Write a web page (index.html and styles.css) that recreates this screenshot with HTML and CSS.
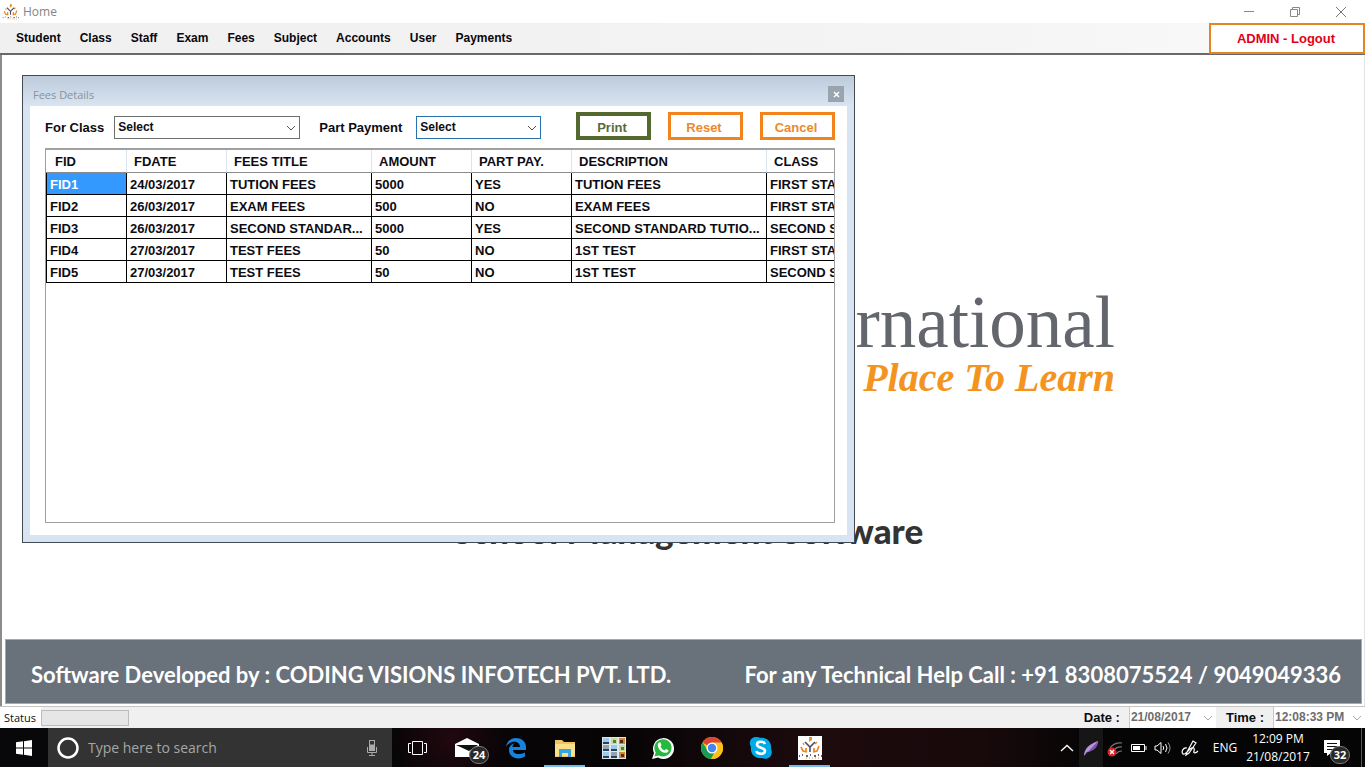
FILE: index.html
```html
<!DOCTYPE html>
<html lang="en">
<head>
<meta charset="utf-8">
<title>Home</title>
<link rel="stylesheet" href="styles.css">
</head>
<body>
<svg class="defs" aria-hidden="true">
  <symbol id="chevron" viewBox="0 0 10 6"><path d="M1 1l4 4 4-4" fill="none" stroke="currentColor"/></symbol>
  <symbol id="school" viewBox="0 0 24 24">
    <path d="M11 1h3v3l-3 2z" fill="#e8922c"/>
    <path d="M5 7l1 2M17 8l2-2" stroke="#e8922c" stroke-width="1.500"/>
    <path d="M7 6l5 5 5-5M12 11v5" fill="none" stroke="#4b4f66" stroke-width="1.600"/>
    <path d="M3 11l2 4 4 1M21 10l-2 5-4 1M8 12v3M16 12v3" fill="none" stroke="#e8862c" stroke-width="1.700"/>
    <path d="M1 20h1m2-1h1m3 1h2m2-1h1m3 1h2m2-1h1m2 1h1" fill="none" stroke="#333" stroke-width="1.300"/>
    <path d="M8 22h14" stroke="#e8862c" stroke-dasharray="1 2"/>
  </symbol>
</svg>

<header class="titlebar">
  <svg class="app-icon" viewBox="0 0 24 24"><use href="#school"/></svg>
  <h1 class="app-title">Home</h1>
  <div class="window-controls">
    <button type="button" aria-label="Minimize"><svg width="12" height="12"><path d="M1 5.500h10" stroke="#888"/></svg></button>
    <button type="button" aria-label="Restore"><svg width="12" height="12" fill="none" stroke="#888"><path d="M1.500 3.500h7v7h-7zM3.500 3v-1.500h7v7h-1.500"/></svg></button>
    <button type="button" aria-label="Close"><svg width="12" height="12"><path d="M1 1l10 10M11 1l-10 10" stroke="#777"/></svg></button>
  </div>
</header>

<nav class="menubar">
  <a href="#student">Student</a>
  <a href="#class">Class</a>
  <a href="#staff">Staff</a>
  <a href="#exam">Exam</a>
  <a href="#fees">Fees</a>
  <a href="#subject">Subject</a>
  <a href="#accounts">Accounts</a>
  <a href="#user">User</a>
  <a href="#payments">Payments</a>
  <button type="button" class="logout">ADMIN - Logout</button>
</nav>

<main class="workspace">
  <div class="splash">
    <div class="brand">
      <p class="brand-name">International</p>
      <p class="brand-tagline">Place To Learn</p>
    </div>
    <p class="product">School Management Software</p>
  </div>
  <footer class="credits">
    <span>Software Developed by : CODING VISIONS INFOTECH PVT. LTD.</span>
    <span>For any Technical Help Call : +91 8308075524 / 9049049336</span>
  </footer>

  <section class="dialog" aria-labelledby="dialog-title">
    <div class="dialog-head">
      <h2 id="dialog-title">Fees Details</h2>
      <button type="button" class="dialog-close" aria-label="Close"><svg width="7" height="7"><path d="M1 1l5 5M6 1l-5 5" stroke="#fff" stroke-width="1.500"/></svg></button>
    </div>
    <div class="dialog-body">
      <form class="filters">
        <label for="for-class">For Class</label>
        <span class="combo combo-class">
          <select id="for-class"><option>Select</option></select>
          <svg class="chevron"><use href="#chevron"/></svg>
        </span>
        <label for="part-payment">Part Payment</label>
        <span class="combo combo-part">
          <select id="part-payment"><option>Select</option></select>
          <svg class="chevron"><use href="#chevron"/></svg>
        </span>
        <div class="actions">
          <button type="button" class="action action-print">Print</button>
          <button type="button" class="action">Reset</button>
          <button type="button" class="action">Cancel</button>
        </div>
      </form>
      <div class="grid">
        <table>
          <colgroup><col class="c-id"><col class="c-mid"><col class="c-title"><col class="c-mid"><col class="c-mid"><col class="c-desc"><col class="c-class"></colgroup>
          <thead>
            <tr><th>FID</th><th>FDATE</th><th>FEES TITLE</th><th>AMOUNT</th><th>PART PAY.</th><th>DESCRIPTION</th><th>CLASS</th></tr>
          </thead>
          <tbody>
            <tr><td class="selected">FID1</td><td>24/03/2017</td><td>TUTION FEES</td><td>5000</td><td>YES</td><td>TUTION FEES</td><td>FIRST STANDARD</td></tr>
            <tr><td>FID2</td><td>26/03/2017</td><td>EXAM FEES</td><td>500</td><td>NO</td><td>EXAM FEES</td><td>FIRST STANDARD</td></tr>
            <tr><td>FID3</td><td>26/03/2017</td><td>SECOND STANDAR...</td><td>5000</td><td>YES</td><td>SECOND STANDARD TUTIO...</td><td>SECOND STANDARD</td></tr>
            <tr><td>FID4</td><td>27/03/2017</td><td>TEST FEES</td><td>50</td><td>NO</td><td>1ST TEST</td><td>FIRST STANDARD</td></tr>
            <tr><td>FID5</td><td>27/03/2017</td><td>TEST FEES</td><td>50</td><td>NO</td><td>1ST TEST</td><td>SECOND STANDARD</td></tr>
          </tbody>
        </table>
      </div>
    </div>
  </section>
</main>

<div class="statusbar">
  <span class="status-label">Status</span>
  <span class="status-progress"></span>
  <label class="status-field" for="date">Date :</label>
  <span class="picker"><input id="date" type="text" value="21/08/2017" readonly><svg class="chevron"><use href="#chevron"/></svg></span>
  <label class="status-field" for="time">Time :</label>
  <span class="picker picker-time"><input id="time" type="text" value="12:08:33 PM" readonly><svg class="chevron"><use href="#chevron"/></svg></span>
</div>

<div class="taskbar">
  <button type="button" class="start" aria-label="Start"><svg width="16" height="16" fill="#fff"><path d="M0 2.300L7 1.300V7.500H0zM8 1.200L16 0V7.500H8zM0 8.500H7V14.700L0 13.700zM8 8.500H16V16L8 14.800z"/></svg></button>
  <div class="search">
    <svg width="24" height="24"><circle cx="12" cy="12" r="9.500" fill="none" stroke="#fff" stroke-width="2.500"/></svg>
    <input type="text" placeholder="Type here to search" aria-label="Search">
    <svg width="12" height="18" fill="none" stroke="#aaa"><rect x="3.500" y="1.500" width="5" height="10"/><path d="M4 6h4v5H4z" fill="#aaa"/><path d="M1.500 8v5.500h9V8M6 13.500v3M3 16.500h6"/></svg>
  </div>
  <div class="apps">
    <button type="button" aria-label="Task View"><svg width="22" height="16" fill="none" stroke="#fff"><path d="M5.500 1.500h10v13h-10zM4 3.500H1.500v9H4M17 3.500h2.500v9H17"/></svg></button>
    <button type="button" aria-label="Mail"><svg width="26" height="22"><path d="M1 7L13 1l12 6v13H1z" fill="#fff"/><path d="M2 8h22l-9 6z" fill="#111"/></svg><span class="count">24</span></button>
    <button type="button" aria-label="Edge"><svg width="22" height="22" viewBox="0 0 22 22"><path d="M1 10C2 4 6 1 11 1c6 0 10 4 10 9v3H8c0 4 6 5.500 12 2.500v4C12 24 4 20 4 13c0-4 3-6 6-7-2 1-2.500 3-2.500 4H15c0-5-5-6-8-5-3 .8-5 3-6 5z" fill="#1683e0"/></svg></button>
    <button type="button" aria-label="File Explorer" class="running"><svg width="22" height="20"><path d="M1 2h7l2 2h11v15H1z" fill="#f0c55c"/><path d="M1 6h20v12H1z" fill="#fbe08c"/><path d="M5 11h12v8h-3v-4H8v4H5z" fill="#39a5dc"/></svg></button>
    <button type="button" aria-label="Photo Gallery"><svg width="24" height="24"><path d="M0 1h24v22H0z" fill="#dfe7ee"/><path d="M1 2h6v6H1zM1 16h6v6H1zM9 9h6v6H9z" fill="#9ccbe6"/><path d="M9 2h6v6H9zM17 9h6v6h-6z" fill="#c3dba0"/><path d="M17 2h6v6h-6zM17 16h6v6h-6z" fill="#d08a3c"/><path d="M1 9h6v6H1zM9 16h6v6H9z" fill="#8fa3b5"/><path d="M1 6h6v2H1zM1 13h6v2H1zM9 20h6v2H9zM1 20h6v2H1zM9 13h6v2H9z" fill="#29425e"/><path d="M11 4h3v3h-3zM19 11h3v3h-3z" fill="#4c832b"/><path d="M18 4h3v3h-3zM19 18h3v3h-3z" fill="#5b2a10"/></svg></button>
    <button type="button" aria-label="WhatsApp"><svg width="24" height="24"><path d="M1 23l2-6A10.500 10.500 0 1 1 7 21.500z" fill="#fff"/><path d="M3.500 20.500l1.200-4A8.600 8.600 0 1 1 7.800 19.400z" fill="#29b83f"/><path d="M8 6.500l1.500 0 1 2.500-1 1.500c1 2 2 3 4 4l1.500-1.500 2.500 1.200c0 2-1.500 2.600-3.500 2.600C10 16.500 6.500 12 6.800 8.700 6.900 7.700 7.200 7 8 6.500z" fill="#fff"/></svg></button>
    <button type="button" aria-label="Chrome"><svg width="22" height="22"><circle cx="11" cy="11" r="11" fill="#fbc116"/><path d="M11 11L1.500 5.500A11 11 0 0 1 20.500 5.500z" fill="#db4437"/><path d="M1.500 5.500A11 11 0 0 0 10 22l4.500-8L7 14z" fill="#179c52"/><path d="M11 5.500h9.500A11 11 0 0 1 10 22l5-9z" fill="#fbc116"/><circle cx="11" cy="11" r="5.500" fill="#fff"/><circle cx="11" cy="11" r="4.200" fill="#4285f4"/></svg></button>
    <button type="button" aria-label="Skype"><svg width="24" height="24"><path d="M7 1a6 6 0 0 1 4 .8C19 1 23 7 22 13c3 6-3 12-9 9C6 23 1 18 2 11-1 6 2 1 7 1z" fill="#00aae8"/><path d="M16 8c-1-3-8-3-8 .5 0 4 8 2.500 8 6.500 0 4-8 3.500-8.500 0" fill="none" stroke="#fff" stroke-width="2.600"/></svg></button>
    <button type="button" aria-label="School" class="running"><svg class="school-tile" viewBox="0 0 24 24"><use href="#school"/></svg></button>
  </div>
  <div class="tray">
    <button type="button" aria-label="Show hidden icons"><svg width="14" height="8"><path d="M1 7l6-5.500L13 7" fill="none" stroke="#fff" stroke-width="1.300"/></svg></button>
    <button type="button" aria-label="Feather" class="lit"><svg width="16" height="18"><path d="M1 17C1 10 6 5 15 2c0 5-4 10-11 11z" fill="#b893dd"/><path d="M1 17C5 12 10 8 15 2c0 5-4 10-11 11z" fill="#7e4fb2"/></svg></button>
    <button type="button" aria-label="Network"><svg width="18" height="18"><path d="M4 9a13 13 0 0 1 12-5M7 12a10 10 0 0 1 9-4M10 15a7 7 0 0 1 6-3" fill="none" stroke="#777" stroke-width="1.200"/><circle cx="6" cy="13" r="4.500" fill="#d5222a"/><path d="M4 11l4 4M8 11l-4 4" stroke="#fff" stroke-width="1.300"/></svg></button>
    <button type="button" aria-label="Battery"><svg width="16" height="10"><path d="M.500 1.500h13v7H.500zM15 3v4" fill="none" stroke="#fff"/><path d="M2 3h7v4H2z" fill="#fff"/></svg></button>
    <button type="button" aria-label="Volume"><svg width="18" height="14" fill="none" stroke="#fff"><path d="M1 5h2l4-3.500v11L3 9H1zM9 5q1.500 2 0 4M11.500 3q3 4 0 8"/><path d="M14 1.500q4 5.500 0 11" stroke="#999"/></svg></button>
    <button type="button" aria-label="Ink workspace" class="ink"><svg width="18" height="18" fill="none" stroke="#fff" stroke-width="1.200"><path d="M6 13L12 2l3 2-7 10-3 2zM6 9c-4-1-6 4-4 6 2 1 4-2 7-5s5-1 4 2 2 2 4 0"/></svg></button>
    <button type="button" class="lang">ENG</button>
    <button type="button" class="clock"><time>12:09 PM</time><time>21/08/2017</time></button>
    <button type="button" aria-label="Notifications" class="notices"><svg width="18" height="18"><path d="M1 1h16v13H8l-4 3v-3H1z" fill="#fff"/><path d="M4 4.500h10M4 7.500h10M4 10.500h7" stroke="#111"/></svg><span class="count">32</span></button>
  </div>
</div>
</body>
</html>
```
FILE: styles.css
```css
* { box-sizing: border-box; }

body {
  margin: 0;
  height: 100vh;
  display: flex;
  flex-direction: column;
  overflow: hidden;
  background: #fff;
  color: #0c0c12;
  font: bold 13px/16px "Liberation Sans", Arial, sans-serif;
}

h1, h2, p { margin: 0; }
button { padding: 0; border: 0; background: none; color: inherit; font: inherit; }
svg { display: block; flex: none; }
.defs { position: absolute; width: 0; height: 0; }

.titlebar { flex: none; display: flex; align-items: center; height: 23px; padding-left: 2px; }
.app-icon { width: 17px; height: 18px; }
.app-title { margin-left: 4px; color: #858585; font: 12px/16px "Open Sans", sans-serif; }
.window-controls { display: flex; margin-left: auto; padding-right: 1px; }
.window-controls button { display: grid; place-items: center; width: 46px; height: 21px; }

.menubar {
  flex: none;
  display: flex;
  align-items: center;
  gap: 19px;
  height: 32px;
  padding-left: 16px;
  border-bottom: 2px solid #696969;
  background: linear-gradient(90deg, #f0f0f0, #f3f3f3 60%, #fafafa);
  font-size: 12px;
}
.menubar a { color: #08080d; text-decoration: none; }
.logout {
  align-self: flex-start;
  flex: none;
  width: 156px;
  height: 31px;
  margin-left: auto;
  padding-right: 2px;
  border: 2px solid #e08624;
  background: #fff;
  color: #e3001b;
  font-size: 13px;
}

.workspace {
  position: relative;
  flex: 1;
  min-height: 0;
  display: flex;
  flex-direction: column;
  border-left: 2px solid #8c8c8c;
  border-right: 1px solid #e3e3e3;
}
.splash { flex: 1; min-height: 0; padding-top: 232px; }
.brand { max-width: 864px; margin: 0 auto; text-align: right; }
.brand-name { color: #63666c; font: 73px/72px "Liberation Serif", serif; }
.brand-tagline { color: #f49420; font: italic bold 40px/38px "Liberation Serif", cursive; }
.product { margin-top: 113px; padding-left: 10px; color: #333; text-align: center; font: 900 35px/40px Lato, sans-serif; }
.credits {
  flex: none;
  display: flex;
  align-items: center;
  justify-content: space-between;
  height: 65px;
  margin: 0 2px 2px 3px;
  padding: 6px 20px 0 25px;
  border: 1px solid #a4abb1;
  background: #69717b;
  color: #fff;
  font: bold 22px/28px Lato, sans-serif;
  white-space: nowrap;
}

.dialog {
  position: absolute;
  top: 20px;
  left: 20px;
  width: 833px;
  display: flex;
  flex-direction: column;
  padding: 0 7px 7px;
  border: 1px solid #454b55;
  background: linear-gradient(#bdcbdb, #d8e4f1 30px);
}
.dialog-head { display: flex; align-items: center; justify-content: space-between; height: 30px; padding: 6px 3px 0; }
.dialog-head h2 { padding-top: 2px; color: #8a9299; font: 11px/16px "Open Sans", sans-serif; }
.dialog-close { display: grid; place-items: center; width: 16px; height: 16px; background: #99a4ae; }
.dialog-body { padding: 6px 12px 12px 15px; background: #fff; }

.filters { display: flex; align-items: center; height: 28px; margin-bottom: 8px; }
.filters label { padding-top: 3px; }
.combo { position: relative; display: block; height: 23px; margin: 3px 19px 0 10px; }
.combo-class { width: 186px; }
.combo-part { width: 125px; margin-left: 14px; }
.combo select {
  appearance: none;
  display: block;
  width: 100%;
  height: 100%;
  padding: 0 3px 2px;
  border: 1px solid #6f6f6f;
  border-radius: 0;
  background: #fff;
  color: #0c0c12;
  font: bold 12px/16px "Liberation Sans", Arial, sans-serif;
}
.combo-part select { border-color: #2a72ad; }
.chevron { position: absolute; right: 4px; top: 9px; width: 10px; height: 6px; color: #555; pointer-events: none; }
.actions { display: flex; gap: 17px; margin-left: auto; }
.action { width: 75px; height: 28px; padding: 3px 3px 0 0; border: 3px solid #f1841c; background: #fff; color: #ec8930; }
.action-print { border: 4px solid #53692d; color: #566c3a; }

.grid { height: 375px; overflow: hidden; border: 1px solid #a0a0a0; border-top-width: 2px; }
.grid table { width: 871px; table-layout: fixed; border-spacing: 0; }
.c-id { width: 81px; }
.c-mid { width: 100px; }
.c-title { width: 145px; }
.c-desc { width: 195px; }
.c-class { width: 150px; }
.grid th { height: 23px; padding: 2px 7px 0; border-right: 1px solid #dbe5ee; border-bottom: 1px solid #8c8c8c; text-align: left; }
.grid td { height: 22px; padding: 2px 3px 0; border-right: 1px solid #000; border-bottom: 1px solid #000; white-space: nowrap; }
.grid th:first-child { padding-left: 9px; }
.grid td:first-child { border-left: 1px solid #000; }
.grid td.selected { background: #3399ff; color: #fff; }

.statusbar { flex: none; display: flex; align-items: center; height: 22px; border-top: 1px solid #c4c4c4; background: #f0f0f0; }
.status-label { align-self: stretch; padding: 3px 5px 0 4px; background: #fff; font: 11px/16px "Open Sans", sans-serif; }
.status-progress { width: 88px; height: 16px; border: 1px solid #bcbcbc; background: #e6e6e6; }
.status-field { margin-right: 9px; }
.status-progress + .status-field { margin-left: auto; }
.picker { position: relative; align-self: stretch; width: 87px; margin-right: 10px; border-left: 1px solid #c8c8c8; background: #fff; }
.picker-time { width: 92px; margin-right: 0; }
.picker input { display: block; width: 100%; height: 20px; padding: 0 1px; border: 0; background: none; color: #6d6d6d; font: bold 12px/16px "Liberation Sans", Arial, sans-serif; }
.picker .chevron { top: 8px; right: 3px; color: #aaa; }

.taskbar {
  flex: none;
  display: flex;
  height: 39px;
  background: radial-gradient(circle at 450px 10px, #21080f, transparent 60px), linear-gradient(90deg, #08080a, #060405 45%, #1d0b0e 60%, #18090b 72%, #050505 80%);
  color: #fff;
  font: 12px/18px "Open Sans", sans-serif;
}
.taskbar button { display: grid; place-items: center; }
.start { width: 48px; }
.search { display: flex; align-items: center; width: 344px; padding: 0 14px 0 8px; background: #333; }
.search input { flex: 1; min-width: 0; padding: 0 8px; border: 0; background: none; font: 14px/20px "Open Sans", sans-serif; }
.search input::placeholder { color: #a6a6a6; opacity: 1; }
.apps { display: flex; padding-left: 1px; }
.apps button { position: relative; width: 49px; }
.running { box-shadow: inset 0 -2px #76b9ed; clip-path: inset(0 4px); }
.school-tile { width: 24px; height: 24px; background: #fff; }
.count {
  position: absolute;
  right: 2px;
  bottom: 3px;
  width: 20px;
  height: 18px;
  border: 1px solid #777;
  border-radius: 9px;
  background: #292929;
  font: bold 11px/16px "Open Sans", sans-serif;
}
.tray { display: flex; margin-left: auto; margin-right: 3px; border-right: 1px solid #555; }
.tray button { position: relative; width: 24px; }
.tray .lit { background: #161616; }
.tray .ink { width: 30px; }
.tray .lang { width: 40px; }
.tray .clock { width: 66px; align-content: center; }
.tray .notices { width: 50px; padding-right: 8px; }
.notices .count { right: 11px; }
```
